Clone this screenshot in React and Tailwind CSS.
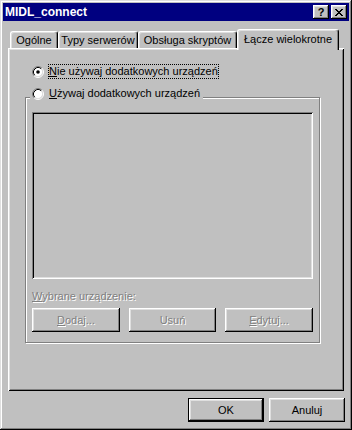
import React from "react";

// win95 bevels
const raised =
  "shadow-[inset_-1px_-1px_#000,inset_1px_1px_#fff,inset_-2px_-2px_#808080,inset_2px_2px_#dfdfdf]";
const sunken =
  "shadow-[inset_1px_1px_#808080,inset_-1px_-1px_#fff,inset_2px_2px_#000,inset_-2px_-2px_#dfdfdf]";
const grayed = "text-[#808080] [text-shadow:1px_1px_0_#fff]";

function Radio({ checked }) {
  return (
    <svg width="12" height="12" viewBox="0 0 12 12" className="shrink-0">
      <circle cx="6" cy="6" r="4.5" fill="#fff" />
      <path d="M2.11 9.89A5.5 5.5 0 0 1 9.89 2.11" fill="none" stroke="#808080" />
      <path d="M9.89 2.11A5.5 5.5 0 0 1 2.11 9.89" fill="none" stroke="#fff" />
      <path d="M2.82 9.18A4.5 4.5 0 0 1 9.18 2.82" fill="none" stroke="#000" />
      <path d="M9.18 2.82A4.5 4.5 0 0 1 2.82 9.18" fill="none" stroke="#dfdfdf" />
      {checked && <circle cx="6" cy="6" r="1.8" fill="#000" />}
    </svg>
  );
}

function CloseGlyph() {
  const cells = [
    [0, 0], [1, 0], [6, 0], [7, 0],
    [1, 1], [2, 1], [5, 1], [6, 1],
    [2, 2], [3, 2], [4, 2], [5, 2],
    [3, 3], [4, 3],
    [2, 4], [3, 4], [4, 4], [5, 4],
    [1, 5], [2, 5], [5, 5], [6, 5],
    [0, 6], [1, 6], [6, 6], [7, 6],
  ];
  return (
    <svg width="8" height="7" viewBox="0 0 8 7" shapeRendering="crispEdges">
      {cells.map(([x, y]) => (
        <rect key={`${x}-${y}`} x={x} y={y} width="1" height="1" fill="#000" />
      ))}
    </svg>
  );
}

function CapBtn({ children }) {
  return (
    <div className={`w-[16px] h-[14px] bg-[#c0c0c0] flex items-center justify-center ${raised}`}>
      {children}
    </div>
  );
}

function Btn({ children, disabled, def, w }) {
  return (
    <div className={`${w} h-[24px] ${def ? "border border-black" : ""}`}>
      <div className={`h-full flex items-center justify-center ${raised} ${disabled ? grayed : ""}`}>
        {children}
      </div>
    </div>
  );
}

function Tab({ label, w, active }) {
  if (active) {
    return (
      <div
        className={`${w} h-[21px] -mb-[2px] relative z-10 bg-[#c0c0c0] flex items-center justify-center pb-[2px] border-l border-t border-r border-l-white border-t-white border-r-black rounded-t-[3px] shadow-[inset_-1px_0_#808080,inset_1px_1px_#dfdfdf]`}
      >
        {label}
      </div>
    );
  }
  return (
    <div
      className={`${w} h-[17px] flex items-center justify-center border-l border-t border-r border-l-white border-t-white border-r-black rounded-t-[3px] shadow-[inset_-1px_0_#808080,inset_1px_1px_#dfdfdf]`}
    >
      {label}
    </div>
  );
}

export default function App() {
  return (
    <div className="w-[352px] h-[430px] bg-[#c0c0c0] p-[3px] flex flex-col font-['Liberation_Sans',Arial,sans-serif] text-[11px] leading-[13px] text-black shadow-[inset_-1px_-1px_#000,inset_1px_1px_#dfdfdf,inset_-2px_-2px_#808080,inset_2px_2px_#fff]">
      {/* title bar */}
      <div className="h-[18px] bg-[#000080] flex items-center justify-between px-[2px]">
        <span className="text-white font-bold text-[12px] leading-none">MIDL_connect</span>
        <div className="flex gap-[2px]">
          <CapBtn>
            <span className="font-bold text-[11px] leading-none">?</span>
          </CapBtn>
          <CapBtn>
            <CloseGlyph />
          </CapBtn>
        </div>
      </div>

      {/* tabs */}
      <div className="mt-[8px] h-[19px] flex items-end pl-[7px]">
        <Tab label="Ogólne" w="w-[48px]" />
        <Tab label="Typy serwerów" w="w-[80px]" />
        <Tab label="Obsługa skryptów" w="w-[99px]" />
        <Tab label="Łącze wielokrotne" w="w-[102px]" active />
      </div>

      {/* tab page */}
      <div className="mx-[5px] h-[343px] flex flex-col pt-[16px] shadow-[inset_1px_1px_#fff,inset_-1px_-1px_#000,inset_2px_2px_#dfdfdf,inset_-2px_-2px_#808080]">
        <div className="ml-[24px] h-[15px] flex items-center gap-[4px]">
          <Radio checked />
          <span className="border border-dotted border-black">
            <span className="underline">N</span>ie używaj dodatkowych urządzeń
          </span>
        </div>

        <div className="mt-[18px] ml-[17px] w-[295px] h-[246px] relative border border-[#808080] shadow-[1px_1px_0_#fff,inset_1px_1px_0_#fff] pt-[14px] px-[6px] flex flex-col">
          <div className="absolute -top-[12px] left-[4px] h-[15px] px-[2px] bg-[#c0c0c0] flex items-center gap-[4px]">
            <Radio />
            <span className="px-[1px]">
              <span className="underline">U</span>żywaj dodatkowych urządzeń
            </span>
          </div>

          <div className={`h-[167px] w-full bg-[#c0c0c0] ${sunken}`} />

          <div className={`mt-[11px] ${grayed}`}>
            <span className="underline">W</span>ybrane urządzenie:
          </div>

          <div className="mt-[5px] flex justify-between">
            <Btn disabled w="w-[88px]">
              <span>
                <span className="underline">D</span>odaj...
              </span>
            </Btn>
            <Btn disabled w="w-[87px]">
              Usuń
            </Btn>
            <Btn disabled w="w-[88px]">
              <span>
                <span className="underline">E</span>dytuj...
              </span>
            </Btn>
          </div>
        </div>
      </div>

      {/* dialog buttons */}
      <div className="mt-[7px] flex justify-end gap-[5px] pr-[4px]">
        <Btn def w="w-[76px]">
          OK
        </Btn>
        <Btn w="w-[76px]">Anuluj</Btn>
      </div>
    </div>
  );
}
